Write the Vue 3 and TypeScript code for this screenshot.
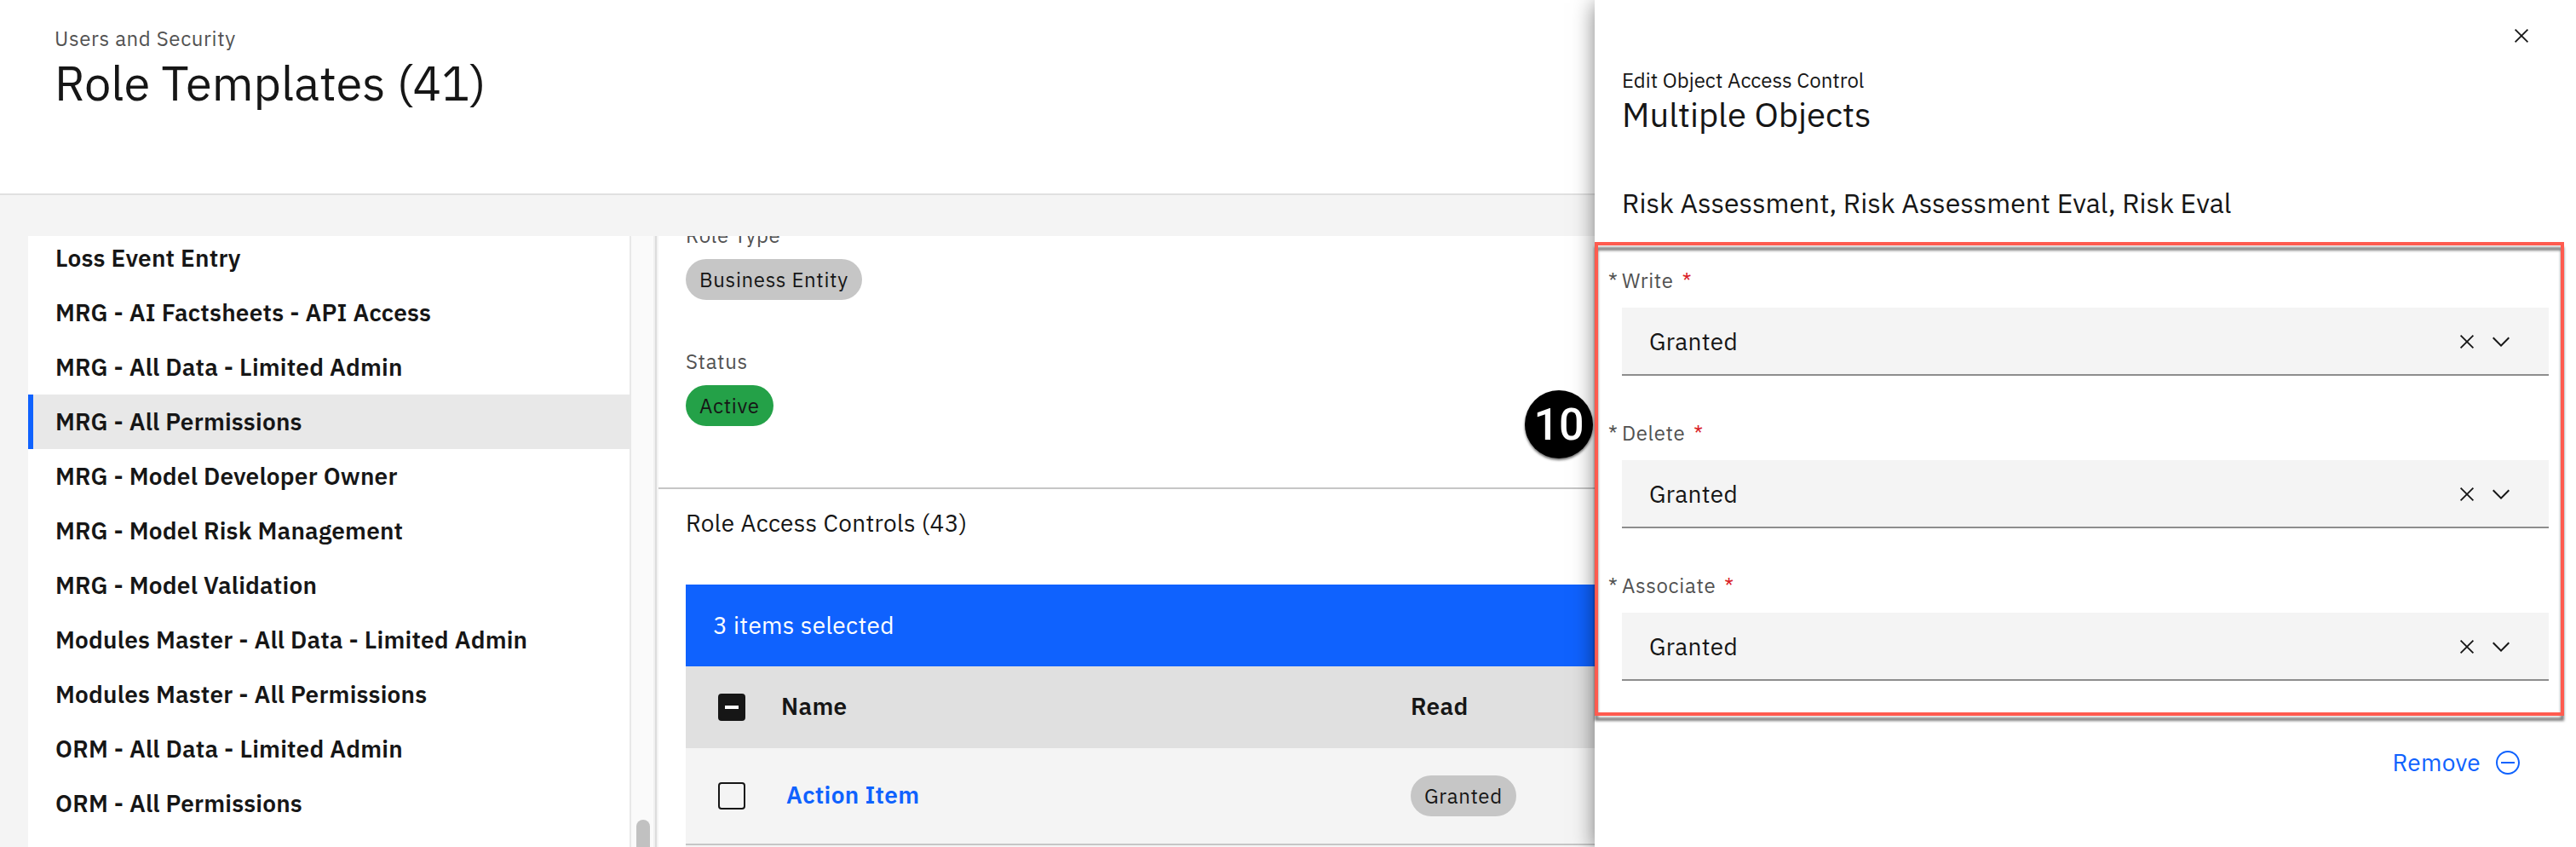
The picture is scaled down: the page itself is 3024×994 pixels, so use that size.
<script setup lang="ts">
import { ref } from 'vue'

interface AccessField {
  label: string
  value: string
}

const templates: string[] = [
  'Loss Event Entry',
  'MRG - AI Factsheets - API Access',
  'MRG - All Data - Limited Admin',
  'MRG - All Permissions',
  'MRG - Model Developer Owner',
  'MRG - Model Risk Management',
  'MRG - Model Validation',
  'Modules Master - All Data - Limited Admin',
  'Modules Master - All Permissions',
  'ORM - All Data - Limited Admin',
  'ORM - All Permissions',
]
const selected = ref('MRG - All Permissions')

const fields: AccessField[] = [
  { label: 'Write', value: 'Granted' },
  { label: 'Delete', value: 'Granted' },
  { label: 'Associate', value: 'Granted' },
]
</script>

<template>
  <div class="page">
    <header class="header">
      <p class="eyebrow">Users and Security</p>
      <h1 class="title">Role Templates (41)</h1>
    </header>

    <div class="body">
      <div class="list">
        <ul class="rows">
          <li
            v-for="name in templates"
            :key="name"
            class="row"
            :class="{ active: name === selected }"
            @click="selected = name"
          >{{ name }}</li>
        </ul>
        <div class="track"><div class="thumb"></div></div>
      </div>

      <main class="detail">
        <section class="facts">
          <p class="label">Role Type</p>
          <span class="tag">Business Entity</span>
          <p class="label spaced">Status</p>
          <span class="tag green">Active</span>
        </section>
        <section class="controls">
          <h2 class="subtitle">Role Access Controls (43)</h2>
          <div class="batch">3 items selected</div>
          <div class="trow thead">
            <span class="check mixed"></span>
            <span class="cell">Name</span>
            <span class="cell">Read</span>
          </div>
          <div class="trow item">
            <span class="check"></span>
            <a class="cell link">Action Item</a>
            <span><span class="tag">Granted</span></span>
          </div>
          <div class="trow item"></div>
        </section>
      </main>
    </div>

    <aside class="panel">
      <svg class="close" viewBox="0 0 32 32">
        <path d="M8.6 8.6 23.4 23.4M23.4 8.6 8.6 23.4" />
      </svg>
      <p class="kicker">Edit Object Access Control</p>
      <h2 class="ptitle">Multiple Objects</h2>
      <p class="objects">Risk Assessment, Risk Assessment Eval, Risk Eval</p>

      <div class="fields">
        <div v-for="f in fields" :key="f.label" class="field">
          <div class="flabel">
            <span class="star">*</span>{{ f.label }}<span class="req">*</span>
          </div>
          <div class="select">
            <span class="value">{{ f.value }}</span>
            <svg class="icon cross" viewBox="0 0 32 32">
              <path d="M8.6 8.6 23.4 23.4M23.4 8.6 8.6 23.4" />
            </svg>
            <svg class="icon chevron" viewBox="0 0 32 32">
              <path d="M16 22 6 12l1.4-1.4 8.6 8.6 8.6-8.6L26 12z" />
            </svg>
          </div>
        </div>
      </div>

      <button class="remove">
        Remove
        <svg class="minus" viewBox="0 0 32 32">
          <path d="M16 4c6.6 0 12 5.4 12 12s-5.4 12-12 12S4 22.6 4 16 9.4 4 16 4m0-2C8.3 2 2 8.3 2 16s6.3 14 14 14 14-6.3 14-14S23.7 2 16 2z" />
          <path d="M8 15h16v2H8z" />
        </svg>
      </button>
    </aside>

    <div class="highlight"></div>
    <div class="badge">10</div>
  </div>
</template>

<style>
body {
  margin: 0;
  background: #fff;
}
</style>

<style scoped>
.page {
  position: relative;
  display: flex;
  flex-direction: column;
  width: 3024px;
  height: 994px;
  overflow: hidden;
  background: #f4f4f4;
  color: #161616;
  font-family: "IBM Plex Sans", Roboto, "Liberation Sans", sans-serif;
  font-size: 28px;
  letter-spacing: 0.32px;
}
.page * {
  box-sizing: border-box;
}
p,
h1,
h2,
ul {
  margin: 0;
  padding: 0;
  font-weight: 400;
}

.header {
  flex: none;
  height: 229px;
  padding: 29px 64px 0;
  background: #fff;
  border-bottom: 2px solid #e0e0e0;
}
.eyebrow,
.label {
  font-size: 24px;
  line-height: 32px;
  letter-spacing: 0.64px;
  color: #525252;
}
.title {
  margin-top: 4px;
  font-size: 56px;
  line-height: 64px;
  letter-spacing: 0;
}

.body {
  flex: 1;
  display: flex;
  min-height: 0;
  padding: 48px 0 0 33px;
}
.list {
  flex: none;
  display: flex;
  width: 740px;
  overflow: hidden;
  background: #fafafa;
  border-right: 2px solid #f4f4f4;
  box-shadow: inset -2px 0 #dcdcdc, inset -4px 0 #f0f0f0;
}
.rows {
  flex: none;
  width: 708px;
  margin-top: -6px;
  list-style: none;
  background: #fff;
  border-right: 2px solid #e8e8e8;
}
.row {
  height: 64px;
  padding-left: 32px;
  line-height: 64px;
  font-weight: 600;
  letter-spacing: 0.2px;
  white-space: nowrap;
}
.row.active {
  padding-left: 26px;
  background: #e8e8e8;
  border-left: 6px solid #0f62fe;
}
.track {
  width: 26px;
  padding: 685px 4px 0 6px;
}
.thumb {
  height: 60px;
  border-radius: 8px;
  background: #c1c1c1;
}

.detail {
  flex: 1;
  overflow: hidden;
  background: #fff;
}
.facts {
  display: flow-root;
  height: 297px;
  padding-left: 32px;
  border-bottom: 2px solid #c6c6c6;
}
.facts .label {
  margin: -17px 0 12px;
}
.facts .label.spaced {
  margin-top: 56px;
}
.tag {
  display: block;
  width: fit-content;
  height: 48px;
  padding: 0 16px;
  border-radius: 24px;
  background: #c6c6c6;
  font-size: 24px;
  line-height: 48px;
  letter-spacing: 0.64px;
}
.tag.green {
  background: #24a148;
}
.controls {
  padding: 22px 0 0 32px;
}
.subtitle {
  font-size: 28px;
  line-height: 36px;
  margin-bottom: 54px;
}
.batch {
  height: 96px;
  padding-left: 32px;
  line-height: 96px;
  background: #0f62fe;
  color: #fff;
}
.trow {
  display: grid;
  grid-template-columns: 74px 739px 1fr;
  align-items: center;
  padding-left: 38px;
}
.cell {
  line-height: 36px;
  padding-bottom: 2px;
}
.thead {
  height: 96px;
  background: #e0e0e0;
  font-weight: 600;
}
.item {
  height: 114px;
  background: #f4f4f4;
  border-bottom: 2px solid #c6c6c6;
}
.check {
  display: flex;
  align-items: center;
  justify-content: center;
  width: 32px;
  height: 32px;
  border: 2px solid #161616;
  border-radius: 4px;
}
.check.mixed {
  background: #161616;
}
.check.mixed::after {
  content: "";
  width: 16px;
  height: 4px;
  background: #fff;
}
.link {
  padding-left: 6px;
  font-weight: 600;
  color: #0f62fe;
}

.panel {
  position: absolute;
  top: 0;
  right: 0;
  width: 1152px;
  height: 994px;
  padding: 78px 32px 0;
  background: #fff;
  box-shadow: 0 4px 24px rgba(0, 0, 0, 0.5);
}
.close {
  position: absolute;
  top: 26px;
  right: 48px;
  width: 32px;
  height: 32px;
}
.close path,
.cross path {
  fill: none;
  stroke: #161616;
  stroke-width: 1.8;
}
.kicker {
  font-size: 24px;
  line-height: 32px;
  letter-spacing: 0;
}
.ptitle {
  font-size: 40px;
  line-height: 48px;
  letter-spacing: 0;
}
.objects {
  margin-top: 60px;
  font-size: 32px;
  line-height: 40px;
  letter-spacing: 0;
}
.fields {
  display: flex;
  flex-direction: column;
  gap: 51px;
  margin-top: 55px;
}
.flabel {
  position: relative;
  height: 32px;
  margin-bottom: 16px;
  font-size: 24px;
  line-height: 32px;
  letter-spacing: 0.64px;
  color: #525252;
}
.star {
  position: absolute;
  left: -16px;
}
.req {
  margin-left: 10px;
  color: #da1e28;
}
.select {
  display: flex;
  align-items: center;
  height: 80px;
  padding: 0 40px 0 32px;
  background: #f4f4f4;
  border-bottom: 2px solid #8d8d8d;
}
.value {
  flex: 1;
}
.icon {
  width: 32px;
  height: 32px;
  margin-top: 2px;
  fill: #161616;
}
.chevron {
  margin-left: 8px;
}
.remove {
  display: flex;
  align-items: center;
  gap: 16px;
  height: 36px;
  margin: 78px 32px 0 auto;
  padding: 0;
  border: 0;
  background: none;
  color: #0f62fe;
  font: inherit;
  letter-spacing: 0.32px;
  line-height: 36px;
}
.minus {
  width: 32px;
  height: 32px;
  fill: #0f62fe;
}

.highlight {
  position: absolute;
  left: 1872px;
  top: 284px;
  width: 1138px;
  height: 556px;
  border: 4px solid #ff5b4f;
  filter: drop-shadow(0 6px 1.5px rgba(0, 0, 0, 0.5));
}
.badge {
  position: absolute;
  left: 1790px;
  top: 458px;
  width: 80px;
  height: 80px;
  border-radius: 50%;
  background: #000;
  color: #fff;
  box-shadow: 0 2px 3px rgba(0, 0, 0, 0.6);
  font: 500 52px/81px Roboto, "Liberation Sans", sans-serif;
  letter-spacing: 0;
  text-align: center;
}
</style>
